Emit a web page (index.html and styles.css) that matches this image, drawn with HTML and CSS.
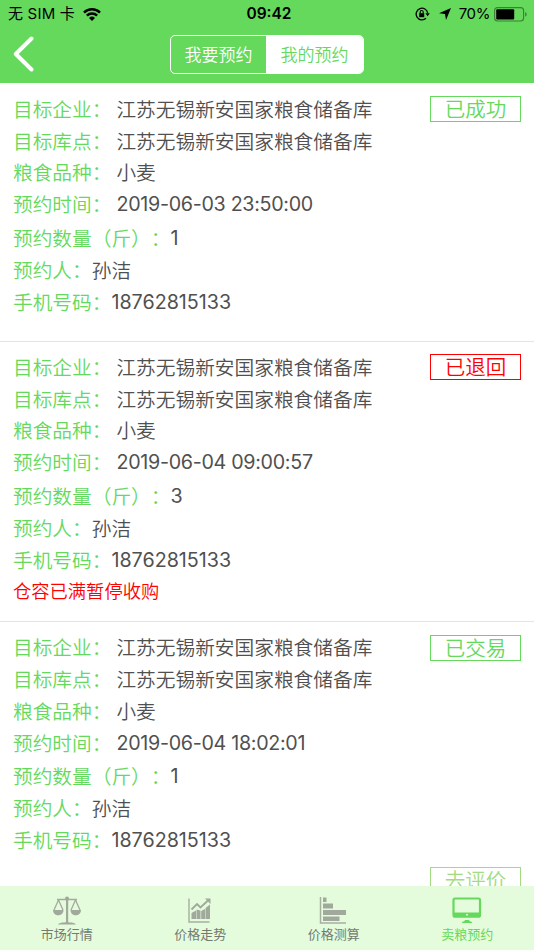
FILE: index.html
```html
<!DOCTYPE html>
<html lang="zh-CN">
<head>
<meta charset="utf-8">
<title>我的预约</title>
<link rel="stylesheet" href="styles.css">
</head>
<body>
<div class="app">
  <header class="header">
    <div class="status">
      <div class="carrier"><span>无 SIM 卡</span>
        <svg class="wifi" viewBox="0 0 18 13" width="18" height="13"><g fill="none" stroke="#000" stroke-width="2.5"><path d="M1 4.6a11.3 11.3 0 0 1 16 0"/><path d="M3.900 7.700a7.200 7.200 0 0 1 10.200 0"/></g><path d="M6 10a4.300 4.300 0 0 1 6 0l-3 3z"/></svg>
      </div>
      <div class="clock">09:42</div>
      <div class="indicators">
        <svg class="lock" viewBox="0 0 15 14" width="15" height="14"><path d="M12.700 6.200A5.800 5.800 0 1 0 11 11.200" fill="none" stroke="#000" stroke-width="1.300"/><path d="M10.400 6.300h4.400l-2.200 3z"/><path d="M4.200 6.200h5v4h-5z"/><path d="M5.200 6.500V5a1.500 1.500 0 0 1 3 0v1.500" fill="none" stroke="#000" stroke-width="1.100"/></svg>
        <svg class="arrow" viewBox="0 0 12 12" width="12" height="12"><path d="M12 0 7 12 6 6.100 0 5.300z"/></svg>
        <span class="percent">70%</span>
        <svg class="battery" viewBox="0 0 34 15" width="34" height="15"><rect x=".6" y=".6" width="29" height="13.400" rx="3" fill="none" stroke="#3c7f35" stroke-width="1.100"/><rect x="2.200" y="2.200" width="18" height="10.200" rx="1"/><path d="M31.200 5.200c2 .6 2 3.800 0 4.400z" fill="#3c7f35"/></svg>
      </div>
    </div>
    <nav class="navbar">
      <svg class="back" viewBox="0 0 22 36" width="22" height="36"><path d="M18.500 2.500 2.800 18l15.700 15.500" fill="none" stroke="#fff" stroke-width="4" stroke-linecap="round" stroke-linejoin="round"/></svg>
      <div class="segmented"><span class="segment">我要预约</span><span class="segment active">我的预约</span></div>
    </nav>
  </header>

  <main class="list">
    <section class="card card-first">
      <div class="fields">
        <div class="row"><span class="label">目标企业：</span><span class="value">江苏无锡新安国家粮食储备库</span></div>
        <div class="row short"><span class="label">目标库点：</span><span class="value">江苏无锡新安国家粮食储备库</span></div>
        <div class="row"><span class="label">粮食品种：</span><span class="value">小麦</span></div>
        <div class="row tall"><span class="label">预约时间：</span><span class="value num date">2019-06-03 23:50:00</span></div>
        <div class="row tight"><span class="label">预约数量（斤）：</span><span class="value num">1</span></div>
        <div class="row tight"><span class="label">预约人：</span><span class="value">孙洁</span></div>
        <div class="row tight"><span class="label">手机号码：</span><span class="value num">18762815133</span></div>
      </div>
      <div class="side"><span class="tag">已成功</span></div>
    </section>

    <section class="card card-returned">
      <div class="fields">
        <div class="row"><span class="label">目标企业：</span><span class="value">江苏无锡新安国家粮食储备库</span></div>
        <div class="row short"><span class="label">目标库点：</span><span class="value">江苏无锡新安国家粮食储备库</span></div>
        <div class="row"><span class="label">粮食品种：</span><span class="value">小麦</span></div>
        <div class="row tall"><span class="label">预约时间：</span><span class="value num date">2019-06-04 09:00:57</span></div>
        <div class="row tight"><span class="label">预约数量（斤）：</span><span class="value num">3</span></div>
        <div class="row tight"><span class="label">预约人：</span><span class="value">孙洁</span></div>
        <div class="row tight"><span class="label">手机号码：</span><span class="value num">18762815133</span></div>
        <div class="notice">仓容已满暂停收购</div>
      </div>
      <div class="side"><span class="tag tag-red">已退回</span></div>
    </section>

    <section class="card card-traded">
      <div class="fields">
        <div class="row"><span class="label">目标企业：</span><span class="value">江苏无锡新安国家粮食储备库</span></div>
        <div class="row"><span class="label">目标库点：</span><span class="value">江苏无锡新安国家粮食储备库</span></div>
        <div class="row"><span class="label">粮食品种：</span><span class="value">小麦</span></div>
        <div class="row tall"><span class="label">预约时间：</span><span class="value num date">2019-06-04 18:02:01</span></div>
        <div class="row tight"><span class="label">预约数量（斤）：</span><span class="value num">1</span></div>
        <div class="row tight"><span class="label">预约人：</span><span class="value">孙洁</span></div>
        <div class="row tight"><span class="label">手机号码：</span><span class="value num">18762815133</span></div>
      </div>
      <div class="side"><span class="tag">已交易</span><span class="tag tag-action">去评价</span></div>
    </section>
  </main>

  <footer class="tabbar">
    <div class="tab">
      <svg viewBox="0 0 30 30" width="30" height="30"><g fill="none" stroke="#a3aa9e" stroke-width="1.300"><path d="M5 4.500h20M6.500 5 2 15M6.500 5l4.500 10M23.500 5 19 15M23.500 5 28 15"/></g><g fill="#a1a89c"><path d="M14 2h2.200v26H14z"/><circle cx="15" cy="3.500" r="2"/><path d="M1 15h10.500c0 7-10.500 7-10.500 0zM18.500 15H29c0 7-10.500 7-10.500 0zM6 29.500c1-3 17-3 18 0z"/></g></svg>
      <span>市场行情</span>
    </div>
    <div class="tab">
      <svg viewBox="0 0 30 30" width="30" height="30"><path d="M4 3.500v23.500h20.500" fill="none" stroke="#a7aea2" stroke-width="1.400"/><path d="m6.500 14.500 5.500-5.500 3.500 3.500 7.500-7" fill="none" stroke="#a1a89c" stroke-width="1.900"/><path d="M20 3.500h5.500V9zM6.500 18l4.500-2.500V24H6.500zM11.500 14.500l4 1v8.500h-4zM16.200 16l3.800-2v10h-3.800zM20.500 13l4.500-3.500V24h-4.500z" fill="#a1a89c"/></svg>
      <span>价格走势</span>
    </div>
    <div class="tab">
      <svg viewBox="0 0 30 30" width="30" height="30"><path d="M1.500 2v26H27" fill="none" stroke="#a7aea2" stroke-width="1.500"/><path d="M4 2.500h3.500v4.500H4zM4 8.500h10v5H4zM4 15h23v5H4zM4 21.500h16.500v4.500H4z" fill="#a1a89c"/></svg>
      <span>价格测算</span>
    </div>
    <div class="tab current">
      <svg viewBox="0 0 30 30" width="30" height="30"><rect x="1.500" y="3.500" width="26.500" height="18" rx="1.500" fill="none" stroke="#65d95c" stroke-width="2.200"/><path d="M1 17.500h27.500v3.500q0 1.500-1.500 1.500H2.500Q1 22.500 1 21zM13 25h4l.7 1.300 2.300.7v1H10v-1l2.300-.7z" fill="#65d95c"/><circle cx="15" cy="19.800" r="1" fill="#dff8d7"/></svg>
      <span>卖粮预约</span>
    </div>
  </footer>
</div>
</body>
</html>
```
FILE: styles.css
```css
* { box-sizing: border-box; }
body { margin: 0; background: #fff; font-family: "Noto Sans CJK SC", sans-serif; text-spacing-trim: space-all; }
svg { display: block; flex: none; }

.app { height: 950px; display: flex; flex-direction: column; overflow: hidden; }

.header { flex: none; height: 83px; background: #65d95c; }
.status {
  height: 28px; padding: 0 6px 0 8px;
  display: grid; grid-template-columns: 1fr auto 1fr; align-items: center;
  font-family: Inter, "Noto Sans CJK SC", sans-serif; font-size: 15px; line-height: 28px; color: #000;
}
.carrier { display: flex; align-items: center; gap: 8px; letter-spacing: 0.200px; }
.clock { font-weight: 600; font-size: 15.500px; padding-left: 2px; }
.indicators { display: flex; align-items: center; justify-content: flex-end; }
.lock { margin-right: 9px; }
.arrow { margin-right: 8px; }
.percent { letter-spacing: -0.400px; }
.battery { margin-left: 4px; }

.navbar { height: 55px; display: grid; grid-template-columns: 1fr auto 1fr; align-items: start; }
.back { margin: 8px 0 0 13px; }
.segmented {
  margin-top: 7px; width: 194px; height: 39px; display: flex;
  border: 1.500px solid #fff; border-radius: 5px; overflow: hidden;
}
.segment { width: 95px; flex: none; text-align: center; font-size: 17px; line-height: 36px; font-weight: 350; color: #fff; }
.segment.active { width: 97px; background: #fff; color: #65d95c; }

.list { flex: 1; min-height: 0; overflow: hidden; }
.card {
  display: flex; justify-content: space-between;
  padding: 10px 13px 0; border-bottom: 1px solid #e4e4e4;
}
.card-first { height: 259px; }
.card-returned { height: 280px; padding-top: 9px; }
.card-traded { height: 290px; padding-top: 9px; }
.row {
  height: 32px; display: flex; gap: 5px; white-space: nowrap;
  font-size: 19.700px; line-height: 32px; font-weight: 350;
}
.row.short { height: 31px; }
.row.tall { height: 34px; }
.card-traded .row.tall { height: 33px; }
.row.tight { gap: 0; }
.label { color: #65d95c; }
.value { color: #505050; }
.num { font-family: Inter, sans-serif; font-weight: 400; }
.date { letter-spacing: -0.300px; line-height: 33px; }
.notice { font-size: 18.300px; line-height: 28px; font-weight: 350; color: #f00; }

.side { display: flex; flex-direction: column; gap: 206px; padding-top: 3px; }
.card-traded .side { padding-top: 4px; }
.tag {
  width: 91px; height: 26px; flex: none; border: 1.500px solid #65d95c;
  color: #65d95c; font-size: 20.500px; line-height: 23px; font-weight: 350; text-align: center;
}
.tag-red { color: #f00; border-color: #f00; }
.tag-action { color: #a3db82; border-color: #a3db82; }

.tabbar { flex: none; height: 64px; background: #e5fcdc; display: flex; }
.tab {
  flex: 1; display: flex; flex-direction: column; align-items: center;
  padding-top: 9px; font-size: 13px; line-height: 18px; color: #737b70;
}
.tab.current { color: #65d95c; }
```
